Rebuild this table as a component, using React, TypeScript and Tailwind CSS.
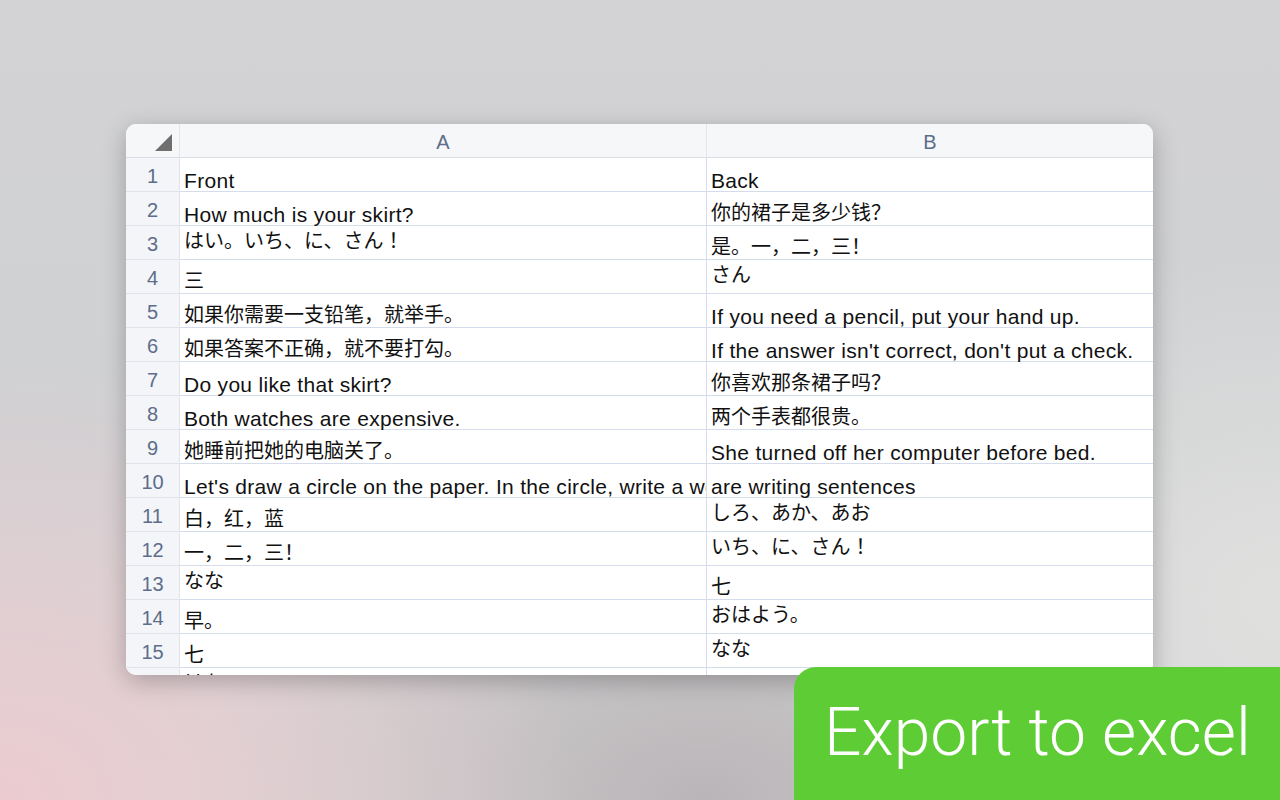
import React from "react";

type Kind = "en" | "zh" | "ja";
type Cell = { text: string; kind: Kind };

const en = (text: string): Cell => ({ text, kind: "en" });
const zh = (text: string): Cell => ({ text, kind: "zh" });
const ja = (text: string): Cell => ({ text, kind: "ja" });

const rows: [Cell, Cell][] = [
  [en("Front"), en("Back")],
  [en("How much is your skirt?"), zh("你的裙子是多少钱？")],
  [ja("はい。いち、に、さん！"), zh("是。一，二，三！")],
  [zh("三"), ja("さん")],
  [zh("如果你需要一支铅笔，就举手。"), en("If you need a pencil, put your hand up.")],
  [zh("如果答案不正确，就不要打勾。"), en("If the answer isn't correct, don't put a check.")],
  [en("Do you like that skirt?"), zh("你喜欢那条裙子吗？")],
  [en("Both watches are expensive."), zh("两个手表都很贵。")],
  [zh("她睡前把她的电脑关了。"), en("She turned off her computer before bed.")],
  [en("Let's draw a circle on the paper. In the circle, write a word"), en("are writing sentences")],
  [zh("白，红，蓝"), ja("しろ、あか、あお")],
  [zh("一，二，三！"), ja("いち、に、さん！")],
  [ja("なな"), zh("七")],
  [zh("早。"), ja("おはよう。")],
  [zh("七"), ja("なな")],
  [ja("はち"), en("")],
];

function CellView({ cell, last }: { cell: Cell; last?: boolean }) {
  const base = `h-[34px] overflow-x-clip whitespace-nowrap border-b border-[#d5dded] pl-[4px] text-[#111] ${
    last ? "" : "border-r border-r-[#d5dded]"
  }`;
  if (cell.kind === "en") {
    return (
      <div className={`${base} pt-[11px] text-[21px] leading-[24px] tracking-[0.3px] font-['Liberation_Sans',sans-serif]`}>
        {cell.text}
      </div>
    );
  }
  if (cell.kind === "zh") {
    return (
      <div className={`${base} pt-[6px] text-[20px] leading-[28px] font-['Noto_Sans_CJK_SC',sans-serif]`}>
        {cell.text}
      </div>
    );
  }
  return (
    <div className={`${base} pt-0 text-[20px] leading-[28px] font-['Noto_Sans_CJK_JP',sans-serif]`}>
      {cell.text}
    </div>
  );
}

export default function App() {
  return (
    <div className="relative w-[1280px] h-[800px] overflow-hidden bg-[radial-gradient(ellipse_45%_55%_at_0%_100%,#ebcbd0_0%,rgba(235,203,208,0)_100%),radial-gradient(ellipse_40%_40%_at_55%_100%,#bab5b8_0%,rgba(186,181,184,0)_100%),radial-gradient(ellipse_30%_45%_at_100%_75%,#dfe0de_0%,rgba(223,224,222,0)_100%),linear-gradient(180deg,#d3d3d5_0%,#d0d1d3_55%,#d6d7d7_100%)]">
      <div className="pt-[124px] pl-[126px]">
        <div className="w-[1027px] h-[551px] overflow-hidden rounded-[10px] bg-white shadow-[0_6px_24px_rgba(0,0,0,0.25)]">
          <div className="grid grid-cols-[54px_527px_446px]">
            {/* header */}
            <div className="h-[34px] bg-[#f6f7f9] border-b border-[#d8dce3] border-r border-r-[#e3e6ea] flex items-end justify-end pr-[7px] pb-[6px]">
              <svg width="17" height="17" viewBox="0 0 17 17">
                <polygon points="17,0 17,17 0,17" fill="#6f6f6f" />
              </svg>
            </div>
            <div className="h-[34px] pt-[2px] bg-[#f6f7f9] border-b border-[#d8dce3] border-r border-r-[#e3e6ea] flex items-center justify-center text-[20px] text-[#5d6d8a] font-['Liberation_Sans',sans-serif]">
              A
            </div>
            <div className="h-[34px] pt-[2px] bg-[#f6f7f9] border-b border-[#d8dce3] flex items-center justify-center text-[20px] text-[#5d6d8a] font-['Liberation_Sans',sans-serif]">
              B
            </div>

            {rows.map(([a, b], i) => (
              <React.Fragment key={i}>
                <div className="h-[34px] pt-[2px] bg-[#f3f5f8] border-b border-[#dfe3ea] border-r border-r-[#e1e4e9] flex items-center justify-center text-[20px] text-[#5d6d8a] font-['Liberation_Sans',sans-serif]">
                  {i + 1}
                </div>
                <CellView cell={a} />
                <CellView cell={b} last />
              </React.Fragment>
            ))}
          </div>
        </div>
      </div>

      <div className="absolute left-[794px] top-[667px] w-[486px] h-[133px] rounded-tl-[22px] bg-[#5ecc34] flex items-center pl-[30px] pb-[2px]">
        <span className="text-white text-[66px] font-light font-['Roboto',sans-serif]">
          Export to excel
        </span>
      </div>
    </div>
  );
}
